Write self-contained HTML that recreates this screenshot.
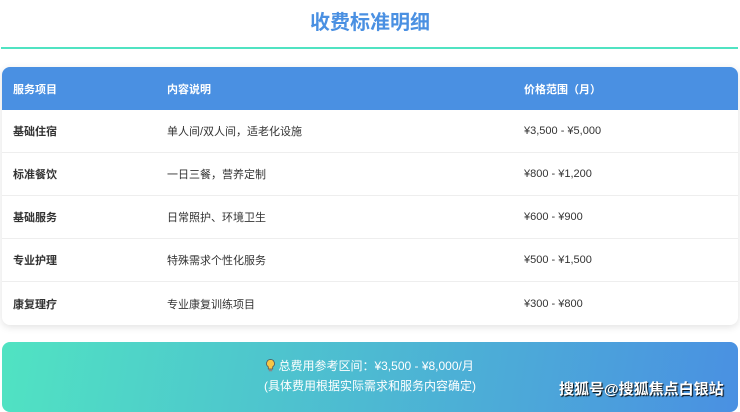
<!DOCTYPE html>
<html><head><meta charset="utf-8"><style>
*{margin:0;padding:0;box-sizing:border-box}
body{width:740px;height:407px;overflow:hidden;background:#fff;font-family:"Liberation Sans","Noto Sans CJK SC",sans-serif;position:relative}
h1{position:absolute;top:8px;left:0;width:740px;text-align:center;font-size:20px;color:#4a90e2;font-weight:bold;line-height:30px}
.line{position:absolute;top:47px;left:1px;width:737px;height:2px;background:#50e3c2}
.tbl{position:absolute;top:67px;left:2px;width:736px;height:258px;border-radius:8px;overflow:hidden;box-shadow:0 2px 8px rgba(0,0,0,0.12);background:#fff}
.row{height:43px;display:flex;align-items:center;border-bottom:1px solid #eee;font-size:11px;color:#333}
.row:last-child{border-bottom:none}
.hd{background:#4a90e2;color:#fff;font-weight:bold;height:43px;border:none}
.c1{width:154px;padding-left:11px;font-weight:bold}
.c2{width:357px;padding-left:11px}
.c3{padding-left:11px}
.hd .c2,.hd .c3{font-weight:bold}
.sum{position:absolute;top:342px;left:2px;width:736px;height:70px;border-radius:8px;background:linear-gradient(100deg,#50e3c2,#4a90e2);color:#fff;text-align:center;font-size:12px}
.sum .a{position:absolute;top:15px;width:100%}
.sum .b{position:absolute;top:35px;width:100%}
.wm{position:absolute;left:559px;top:378px;font-size:15px;color:#fff;font-weight:bold;text-shadow:1px 1px 1px #000}
</style></head><body>
<h1>收费标准明细</h1>
<div class="line"></div>
<div class="tbl">
<div class="row hd"><div class="c1">服务项目</div><div class="c2">内容说明</div><div class="c3">价格范围（月）</div></div>
<div class="row"><div class="c1">基础住宿</div><div class="c2">单人间/双人间，适老化设施</div><div class="c3">¥3,500 - ¥5,000</div></div>
<div class="row"><div class="c1">标准餐饮</div><div class="c2">一日三餐，营养定制</div><div class="c3">¥800 - ¥1,200</div></div>
<div class="row"><div class="c1">基础服务</div><div class="c2">日常照护、环境卫生</div><div class="c3">¥600 - ¥900</div></div>
<div class="row"><div class="c1">专业护理</div><div class="c2">特殊需求个性化服务</div><div class="c3">¥500 - ¥1,500</div></div>
<div class="row"><div class="c1">康复理疗</div><div class="c2">专业康复训练项目</div><div class="c3">¥300 - ¥800</div></div>
</div>
<div class="sum">
<div class="a"><svg width="9" height="13" viewBox="0 0 9 13" style="vertical-align:-2px"><path d="M4.5 0.5a4 4 0 0 1 2.2 7.3V10H2.3V7.8A4 4 0 0 1 4.5 0.5z" fill="#f7c646" stroke="#555" stroke-width=".8"/><rect x="2.8" y="10.3" width="3.4" height="2" fill="#888"/></svg> 总费用参考区间：¥3,500 - ¥8,000/月</div>
<div class="b">(具体费用根据实际需求和服务内容确定)</div>
</div>
<div class="wm">搜狐号@搜狐焦点白银站</div>
</body></html>
